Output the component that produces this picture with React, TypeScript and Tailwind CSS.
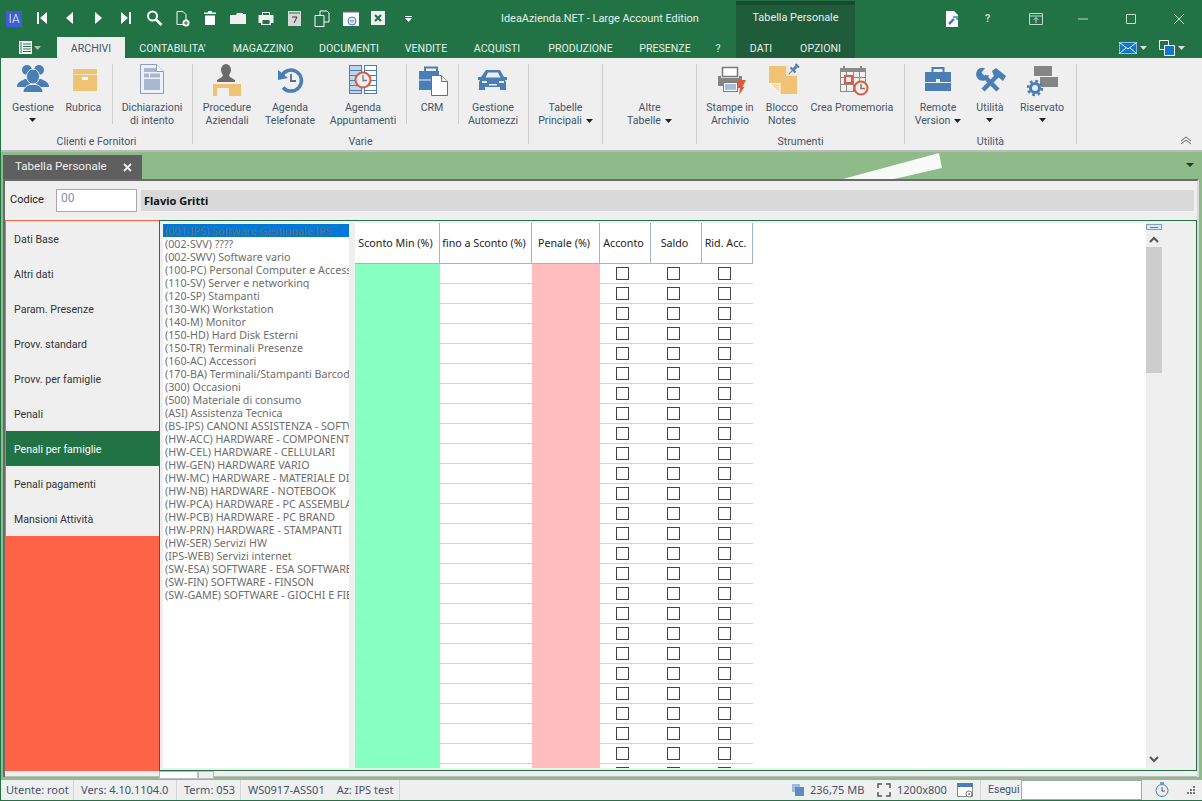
import React from "react";

const B = "#4a7eb6";
const Y = "#efc274";
const R = "#dd5a3c";
const BG = "#efefef";

const Caret = ({ c = "#222" }: { c?: string }) => (
  <svg width="7" height="4" viewBox="0 0 7 4" className="block"><path d="M0 0h7L3.500 4z" fill={c} /></svg>
);

const QA: React.ReactNode[] = [
  <path key="a" d="M4 3h2v12H4zM14 3v12L7 9z" fill="#fff" />,
  <path key="b" d="M12 3v12L5 9z" fill="#fff" />,
  <path key="c" d="M6 3v12l7-6z" fill="#fff" />,
  <path key="d" d="M4 3v12l7-6zM12 3h2v12h-2z" fill="#fff" />,
  <g key="e" fill="none" stroke="#fff" strokeWidth="2"><circle cx="7.500" cy="7" r="4.500" /><path d="M11 10.500l5.500 5.500" strokeWidth="2.500" /></g>,
  <g key="f"><path d="M4 2.500h6l3 3v10H4z" fill="none" stroke="#fff" /><circle cx="13" cy="14" r="3.500" fill="#fff" /><path d="M11 14h4M13 12v4" stroke="#217346" /></g>,
  <path key="g" d="M7 2h4v1.500h4V5H3V3.500h4zM4 6.500h10V16H4z" fill="#fff" />,
  <path key="h" d="M1 6h6l1-2h6v1h3v10H1z" fill="#efefef" />,
  <g key="i"><path d="M5 3h8v3h3.500v8H14v2H4v-2H1.500V6H5z" fill="#efefef" /><path d="M6 4h6v2H6zM5.500 11h7v4h-7z" fill="#217346" /></g>,
  <g key="j"><path d="M3 2h13v15H3z" fill="#d8d8d8" /><path d="M4 4h11" stroke="#217346" /><path d="M7 8h5l-3 6" fill="none" stroke="#333" /></g>,
  <g key="k" fill="none" stroke="#fff"><path d="M2 6.500h9v11H2zM7 6V2h7l2 2v9h-5" /></g>,
  <g key="l"><path d="M2 2h16v15H2z" fill="#fff" /><path d="M2 2h16v1.500H2z" fill="#666" /><circle cx="11" cy="12" r="4" fill="#dfe9f3" stroke="#4a7eb6" /><path d="M9 12h4" stroke="#4a7eb6" /></g>,
  <g key="m"><path d="M2 2h14v14H2z" fill="#efefef" /><path d="M6 6l6 6M12 6l-6 6" stroke="#217346" strokeWidth="2.200" /></g>,
];

function Item({ w, pr = 0, pl = 0, icon, lines, caret, inline, sep }: { w: number; pr?: number; pl?: number; icon?: React.ReactNode; lines: string[]; caret?: boolean; inline?: boolean; sep?: boolean }) {
  return (
    <div className={`flex flex-col items-center shrink-0 h-[60px] ${sep ? "border-r border-[#cfcfcf]" : ""}`} style={{ width: w, paddingRight: pr, paddingLeft: pl }}>
      <div className="h-[36px] w-[44px] shrink-0">
        {icon && <svg width="44" height="36" viewBox="0 0 44 36" className="block overflow-visible">{icon}</svg>}
      </div>
      <div className="mt-[1px] flex flex-col items-center leading-[13px] text-[#44546a] whitespace-nowrap">
        {lines.map((l, i) => (
          <div key={l} className="flex items-center gap-[4px]">
            {l}
            {inline && i === lines.length - 1 && <Caret />}
          </div>
        ))}
        {caret && <div className="mt-[4px]"><Caret /></div>}
      </div>
    </div>
  );
}

function Group({ w, label, children }: { w: number; label?: string; children?: React.ReactNode }) {
  return (
    <div className="shrink-0 flex flex-col border-r border-[#cdcdcd] mt-[6px] h-[80px]" style={{ width: w }}>
      <div className="flex h-[70px] shrink-0">{children}</div>
      <div className="h-[10px] leading-[16px] text-center text-[#44546a] whitespace-nowrap">{label}</div>
    </div>
  );
}

const users = (
  <g fill={B}>
    <circle cx="16" cy="6" r="5" /><circle cx="28" cy="6" r="5" />
    <path d="M6 23C6 18 10 17 14 15h4l2 8z" /><path d="M38 23C38 18 34 17 30 15h-4l-2 8z" />
    <ellipse cx="22" cy="12.500" rx="6.500" ry="7.500" stroke={BG} />
    <path d="M12 28.500c0-5 4-7 7-8h6c3 1 7 3 7 8z" stroke={BG} />
  </g>
);
const box = (
  <g fill={Y}>
    <rect x="11" y="5" width="24" height="5" />
    <rect x="11" y="10.700" width="24" height="16.300" />
    <rect x="20" y="13" width="6" height="3" fill="#fff" />
  </g>
);
const page = (
  <g>
    <path d="M10.500.500h16l7 7v22h-23z" fill="#eef1f8" stroke="#8e9dbb" />
    <path d="M26.500.500v7h7" fill="#fff" stroke="#8e9dbb" />
    <path d="M14 4h12v4H14zM14 9.500h5v4h-5zM20 9.500h10v4H20zM14 15h16v11H14z" fill="#a9b6d3" />
  </g>
);
const desk = (
  <g>
    <ellipse cx="21" cy="6" rx="5" ry="6" fill="#6b6b6b" />
    <path d="M18 11h6l1 2 5 3v2H12v-2l5-3z" fill="#6b6b6b" />
    <path d="M8 20h28v12H24v-8H12v8H8z" fill={Y} />
  </g>
);
const history = (
  <g>
    <path d="M13.500 12A10.500 10.500 0 1 1 15 23.500" fill="none" stroke={B} strokeWidth="3.500" />
    <path d="M10 6v10l10-2z" fill={B} />
    <path d="M23 10v7h5" fill="none" stroke="#5b6f88" strokeWidth="1.800" />
  </g>
);
const rows = [1, 6, 11, 16, 21, 26];
const appts = (
  <g>
    <rect x="8.500" y="1.500" width="12" height="28" fill="#c5d5e8" stroke={B} />
    <rect x="23.500" y="1.500" width="12" height="28" fill="#fff" stroke={B} />
    {rows.map((y) => <path key={y} d={`M8 ${y + 0.5}h13M23 ${y + 0.5}h13`} stroke={B} />)}
    <circle cx="22" cy="16" r="7.500" fill={BG} stroke={R} strokeWidth="2" />
    <path d="M22 11v5.500h4" stroke="#777" strokeWidth="1.300" fill="none" />
  </g>
);
const crm = (
  <g>
    <path d="M15 8V3.500h12V8" fill="none" stroke={B} strokeWidth="2" />
    <rect x="9" y="7" width="20" height="19" fill={B} />
    <path d="M9 16h20" stroke={BG} />
    <path d="M21.500 11.500h10l6 6v14h-16z" fill="#fff" stroke="#6f6f6f" />
    <path d="M31.500 11.500v6h6" fill={BG} stroke="#6f6f6f" />
  </g>
);
const car = (
  <g fill={B}>
    <path d="M15 6h14l4 7h3v3h-2l1 2v8h-6v-3H14v3H8v-8l1-2H7v-3h3z" />
    <path d="M17 8.500h10l2.500 5h-15z" fill={BG} />
    <rect x="11" y="17" width="5" height="2" fill={BG} /><rect x="28" y="17" width="5" height="2" fill={BG} />
    <rect x="18" y="20" width="8" height="1.500" fill={BG} />
  </g>
);
const printer = (
  <g>
    <rect x="14.500" y="3.500" width="15" height="9" fill="#fff" stroke="#7a7a7a" strokeWidth="1.500" />
    <path d="M10 12h3v2h18v-2h3v10H10z" fill="#858585" />
    <rect x="15.500" y="18.500" width="14" height="9" fill="#fff" stroke="#7a7a7a" />
    <path d="M17 21h11M17 23h11M17 25h11" stroke={B} />
    <path d="M30 16h8l-3.500 7h2l-5.500 8 1-7h-2.500z" fill={R} />
  </g>
);
const note = (
  <g>
    <path d="M9 2h28v28H20L9 19z" fill={Y} />
    <path d="M9.500 19.500h10.500v10.500z" fill="#f6dca8" stroke="#fff" />
    <rect x="26" y="0" width="13" height="12" fill={BG} opacity="0.85" />
    <g transform="rotate(45 33 6)" fill={B}>
      <rect x="30.500" y="-1" width="5" height="2" />
      <rect x="31.500" y="1" width="3" height="4" />
      <rect x="29.500" y="5" width="7" height="2" />
      <rect x="32.500" y="7" width="1" height="5" />
    </g>
  </g>
);
const cal = (
  <g>
    <rect x="10.500" y="6.500" width="25" height="21" fill="none" stroke="#8a8a8a" />
    <rect x="10" y="4" width="26" height="4" fill="#8a8a8a" />
    <path d="M14 2v4M31 2v4" stroke="#8a8a8a" strokeWidth="2" />
    <path d="M10 13.500h26M10 20.500h26M16.500 8v20M23.500 8v20M29.500 8v20" stroke="#8a8a8a" />
    <rect x="15" y="12" width="7" height="7" fill={BG} stroke={R} strokeWidth="2" />
    <circle cx="31" cy="24" r="6.500" fill={BG} stroke={R} strokeWidth="2" />
    <path d="M31 20v4.500h4" stroke="#777" strokeWidth="1.500" fill="none" />
  </g>
);
const bag = (
  <g fill={B}>
    <path d="M16.500 8V4h11v4" fill="none" stroke={B} strokeWidth="2" />
    <rect x="9" y="8" width="26" height="10" />
    <rect x="9" y="19" width="26" height="8" />
    <rect x="20" y="15" width="4" height="3.500" fill={BG} />
  </g>
);
const tools = (
  <g fill={B}>
    <path d="M17 4.200A6.500 6.500 0 1 0 21 11l-4.500 1-3-3.500z" />
    <path d="M16 12l14 14" stroke={B} strokeWidth="4.500" />
    <path d="M15 26L30 11" stroke={B} strokeWidth="4.500" />
    <path d="M24 7l4-3 10 8-3 5-5-4-3 2z" />
  </g>
);
const reserved = (
  <g>
    <rect x="14" y="2" width="18" height="10" fill="#858585" />
    <rect x="20" y="13" width="18" height="10" fill="#858585" />
    <circle cx="15" cy="24" r="6" fill={BG} />
    <circle cx="15" cy="24" r="4.500" fill="none" stroke={B} strokeWidth="3" />
    <circle cx="15" cy="24" r="7" fill="none" stroke={B} strokeWidth="2.500" strokeDasharray="2.750 2.750" />
  </g>
);

const families = [
  "(001-IPS) Software Gestionale IPS", "(002-SVV) ????", "(002-SWV) Software vario", "(100-PC) Personal Computer e Accessori",
  "(110-SV) Server e networking", "(120-SP) Stampanti", "(130-WK) Workstation", "(140-M) Monitor", "(150-HD) Hard Disk Esterni",
  "(150-TR) Terminali Presenze", "(160-AC) Accessori", "(170-BA) Terminali/Stampanti Barcode", "(300) Occasioni", "(500) Materiale di consumo",
  "(ASI) Assistenza Tecnica", "(BS-IPS) CANONI ASSISTENZA - SOFTWARE", "(HW-ACC) HARDWARE - COMPONENTI", "(HW-CEL) HARDWARE - CELLULARI",
  "(HW-GEN) HARDWARE VARIO", "(HW-MC) HARDWARE - MATERIALE DI CONSUMO", "(HW-NB) HARDWARE - NOTEBOOK", "(HW-PCA) HARDWARE - PC ASSEMBLATI",
  "(HW-PCB) HARDWARE - PC BRAND", "(HW-PRN) HARDWARE - STAMPANTI", "(HW-SER) Servizi HW", "(IPS-WEB) Servizi internet",
  "(SW-ESA) SOFTWARE - ESA SOFTWARE", "(SW-FIN) SOFTWARE - FINSON", "(SW-GAME) SOFTWARE - GIOCHI E FIERE",
];
const nav = ["Dati Base", "Altri dati", "Param. Presenze", "Provv. standard", "Provv. per famiglie", "Penali", "Penali per famiglie", "Penali pagamenti", "Mansioni Attività"];
const heads: [string, number][] = [["Sconto Min (%)", 85], ["fino a Sconto (%)", 92], ["Penale (%)", 68], ["Acconto", 51], ["Saldo", 51], ["Rid. Acc.", 51]];
const tabs: [string, number][] = [["CONTABILITA'", 95], ["MAGAZZINO", 86], ["DOCUMENTI", 86], ["VENDITE", 68], ["ACQUISTI", 74], ["PRODUZIONE", 93], ["PRESENZE", 76], ["?", 30]];

export default function App() {
  return (
    <div className="relative w-[1202px] h-[801px] overflow-hidden flex flex-col bg-[#217346] text-[10.6px] text-[#222] font-['Roboto',sans-serif]">
      {/* header */}
      <div className="flex h-[58px] shrink-0 text-[#e8f0ea]">
        <div className="w-[736px] flex flex-col">
          <div className="h-[37px] flex items-center pl-[6px]">
            <div className="w-[16px] h-[16px] bg-[#3a5fd8] text-white text-[12px] leading-[16px] text-center font-light mr-[7px]">IA</div>
            {QA.map((q, i) => (
              <div key={i} className="w-[28px] h-[20px] flex items-center justify-center">
                <svg width="20" height="20" viewBox="0 0 20 20">{q}</svg>
              </div>
            ))}
            <div className="ml-[12px] flex flex-col items-center gap-[1px]">
              <div className="w-[7px] h-[1px] bg-white" /><Caret c="#fff" />
            </div>
            <div className="ml-[89px] pt-[2px] text-[10.9px] whitespace-nowrap">IdeaAzienda.NET - Large Account Edition</div>
          </div>
          <div className="h-[21px] flex items-stretch">
            <div className="w-[57px] flex items-center pl-[19px] gap-[2px]">
              <svg width="13" height="13" viewBox="0 0 13 13"><path d="M0 0h13v13H0z" fill="#fff" /><path d="M2 1v11M4 3h8M4 5.500h8M4 8h8M4 10.500h8" stroke="#217346" /></svg>
              <Caret c="#bbb" />
            </div>
            <div className="w-[68px] pt-[3px] bg-[#efefef] text-[#44546a] flex items-center justify-center">ARCHIVI</div>
            {tabs.map(([t, w]) => (
              <div key={t} className="pt-[3px] flex items-center justify-center" style={{ width: w }}>{t}</div>
            ))}
          </div>
        </div>
        <div className="w-[119px] mt-[1px] flex flex-col bg-[#1f5c3a] border-t-[4px] border-[#174a2e]">
          <div className="h-[32px] pb-[5px] flex items-center justify-center text-[10.9px]">Tabella Personale</div>
          <div className="h-[21px] pt-[3px] flex items-center">
            <div className="w-[50px] text-center">DATI</div>
            <div className="flex-1 text-center">OPZIONI</div>
          </div>
        </div>
        <div className="flex-1 flex flex-col">
          <div className="h-[37px] flex items-center pl-[90px]">
            <svg width="14" height="16" viewBox="0 0 14 16"><path d="M1 0h8l4 4v12H1z" fill="#fff" /><path d="M4 13l5-5" stroke={B} strokeWidth="2.500" /><path d="M8 6h4v3" stroke={B} strokeWidth="1.500" fill="none" /></svg>
            <div className="ml-[26px] w-[6px] font-bold text-[#c9d8cf]">?</div>
            <svg className="ml-[38px]" width="14" height="12" viewBox="0 0 14 12" fill="none" stroke="#c9d8cf"><path d="M.5.500h13v11H.5zM.5 3h13M7 10V4.500M4.500 7L7 4.500 9.500 7" /></svg>
            <svg className="ml-[35px]" width="10" height="2" viewBox="0 0 10 2"><path d="M0 1h10" stroke="#c9d8cf" /></svg>
            <svg className="ml-[38px]" width="10" height="10" viewBox="0 0 10 10" fill="none"><path d="M.5.500h9v9h-9z" stroke="#c9d8cf" /></svg>
            <svg className="ml-[38px]" width="10" height="10" viewBox="0 0 10 10"><path d="M0 0l10 10M10 0L0 10" stroke="#c9d8cf" /></svg>
          </div>
          <div className="h-[21px] flex items-center pl-[264px] gap-[3px]">
            <svg width="18" height="12" viewBox="0 0 18 12"><rect width="18" height="12" fill="#0f76d0" stroke="#fff" /><path d="M1 1l8 6 8-6M1 11l6-5M17 11l-6-5" stroke="#fff" fill="none" /></svg>
            <Caret c="#ddd" />
            <svg className="ml-[9px]" width="16" height="16" viewBox="0 0 16 16"><path d="M.5.500h9v9h-9z" fill="#217346" stroke="#fff" /><path d="M5.500 5.500h10v10h-10z" fill="#0f76d0" stroke="#fff" /></svg>
            <Caret c="#ddd" />
          </div>
        </div>
      </div>

      {/* ribbon */}
      <div className="relative ml-[1px] h-[94px] shrink-0 bg-[#efefef] border-b-2 border-[#b9bdb9] flex pr-[1px]">
        <Group w={192} label="Clienti e Fornitori">
          <Item w={64} icon={users} lines={["Gestione"]} caret />
          <Item w={48} pr={10} icon={box} lines={["Rubrica"]} sep />
          <Item w={78} icon={page} lines={["Dichiarazioni", "di intento"]} />
        </Group>
        <Group w={336} label="Varie">
          <Item w={68} icon={desk} lines={["Procedure", "Aziendali"]} />
          <Item w={58} icon={history} lines={["Agenda", "Telefonate"]} />
          <Item w={88} pl={1} icon={appts} lines={["Agenda", "Appuntamenti"]} sep />
          <Item w={52} pr={1} icon={crm} lines={["CRM"]} sep />
          <Item w={68} icon={car} lines={["Gestione", "Automezzi"]} />
        </Group>
        <Group w={74}><Item w={73} lines={["Tabelle", "Principali"]} inline /></Group>
        <Group w={94}><Item w={93} lines={["Altre", "Tabelle"]} inline /></Group>
        <Group w={208} label="Strumenti">
          <Item w={66} icon={printer} lines={["Stampe in", "Archivio"]} />
          <Item w={38} icon={note} lines={["Blocco", "Notes"]} />
          <Item w={102} icon={cal} lines={["Crea Promemoria"]} />
        </Group>
        <Group w={172} label="Utilità">
          <Item w={66} icon={bag} lines={["Remote", "Version"]} inline />
          <Item w={38} icon={tools} lines={["Utilità"]} caret />
          <Item w={66} icon={reserved} lines={["Riservato"]} caret />
        </Group>
        <svg className="absolute left-[1179px] top-[78px]" width="12" height="9" viewBox="0 0 12 9" fill="none" stroke="#666"><path d="M1 5l5-4 5 4M1 8l5-4 5 4" /></svg>
      </div>

      {/* document area */}
      <div className="relative flex-1 min-h-0 flex flex-col bg-[#8fbb8a] ml-[1px]">
        <svg className="absolute left-[841px] top-0" width="102" height="28" viewBox="0 0 102 28"><path d="M97 1l3 15-48 11H1z" fill="#f7faf6" /></svg>
        <div className="h-[27px] shrink-0 flex items-end pl-[2px] relative">
          <div className="w-[139px] h-[24px] bg-[#5f5f5f] text-[#eee] flex items-center pl-[12px] text-[11.6px]">
            <span className="w-[108px]">Tabella Personale</span>
            <svg width="9" height="9" viewBox="0 0 9 9"><path d="M1 1l7 7M8 1L1 8" stroke="#eee" strokeWidth="1.800" /></svg>
          </div>
          <div className="ml-auto mr-[8px] mb-[12px] flex"><svg width="8" height="4" viewBox="0 0 8 4"><path d="M0 0h8L4 4z" fill="#333" /></svg></div>
        </div>
        <div className="flex-1 min-h-0 ml-[2px] mr-[3px] mb-[3px] flex flex-col border-t-2 border-l-2 border-r-2 border-[#6a6a6a] border-r-[#d8d8d8] bg-[#efefef]">
          <div className="h-[39px] shrink-0 flex items-center pl-[5px] pr-[3px]">
            <span className="w-[46px] text-[#222] text-[11px]">Codice</span>
            <div className="w-[81px] h-[23px] bg-white border border-[#a9a9a9] text-[#7f93b8] text-[12px] pl-[4px] leading-[17px]">00</div>
            <div className="ml-[4px] flex-1 h-[21px] bg-[#d9d9d9] font-bold text-[11px] text-[#111] pl-[3px] leading-[21px] font-['Noto_Sans',sans-serif]">Flavio Gritti</div>
          </div>
          <div className="flex-1 min-h-0 flex">
            <div className="w-[154px] shrink-0 bg-[#ff6347] pl-[1px] pt-[1px]">
              {nav.map((n, i) => (
                <div key={n} className={`h-[35px] pt-[3px] flex items-center pl-[8px] ${i === 6 ? "bg-[#217346] text-white" : "bg-[#efefef] text-[#333]"}`}>{n}</div>
              ))}
            </div>
            <div className="flex-1 min-w-0 flex border border-[#217346] pt-[2px] pl-[3px] font-['Noto_Sans',sans-serif] text-[10.7px]">
              <div className="w-[186px] shrink-0 bg-white overflow-hidden mb-[2px] pt-[1px]">
                {families.map((f, i) => (
                  <div key={f} className={`h-[13px] pt-[1px] leading-[13px] pl-[2px] whitespace-nowrap overflow-hidden text-[#6d6d6d] ${i === 0 ? "bg-[#0078d7]" : ""}`}>{f}</div>
                ))}
              </div>
              <div className="ml-[6px] w-[791px] shrink-0 bg-white overflow-hidden mb-[2px]">
                <div className="w-[398px]">
                  <div className="flex h-[41px] border-b border-[#9db5cf]">
                    {heads.map(([h, w]) => (
                      <div key={h} className="flex items-center justify-center pr-[3px] border-r border-[#9db5cf] text-[#222] whitespace-nowrap" style={{ width: w }}>{h}</div>
                    ))}
                  </div>
                  {Array.from({ length: 26 }).map((_, r) => (
                    <div key={r} className="flex h-[20px]">
                      {heads.map(([h, w], c) => (
                        <div key={h} className={`flex items-center justify-center pr-[6px] border-b border-[#d2d2d2] ${c === 0 ? "bg-[#86ffc0]" : c === 2 ? "bg-[#ffbdbd]" : "bg-white"}`} style={{ width: w }}>
                          {c > 2 && <div className="w-[13px] h-[13px] mb-[1px] border border-[#444] bg-white" />}
                        </div>
                      ))}
                    </div>
                  ))}
                </div>
              </div>
              <div className="w-[16px] shrink-0 flex flex-col items-center relative bg-[#efefef] mb-[2px]">
                <div className="w-[16px] h-[6px] mt-[1px] bg-[#dde7f2] border border-[#7d9fc6] flex items-center justify-center"><div className="w-[8px] h-[1px] bg-[#5b82b0]" /></div>
                <svg className="mt-[6px]" width="10" height="7" viewBox="0 0 10 7" fill="none" stroke="#555" strokeWidth="2"><path d="M1 6l4-4 4 4" /></svg>
                <div className="w-[16px] h-[126px] mt-[4px] bg-[#cdcdcd]" />
                <svg className="mt-auto mb-[5px]" width="10" height="7" viewBox="0 0 10 7" fill="none" stroke="#555" strokeWidth="2"><path d="M1 1l4 4 4-4" /></svg>
              </div>
            </div>
          </div>
          <div className="h-[6px] shrink-0 flex pl-[154px] border-b border-[#bdbdbd]">
            <div className="w-[39px] h-[8px] border border-[#bbb] bg-white shrink-0" />
            <div className="w-[16px] h-[8px] border border-[#bbb] bg-[#efefef] shrink-0" />
          </div>
        </div>
      </div>

      {/* status bar */}
      <div className="ml-[1px] h-[21px] shrink-0 bg-[#efefef] border-b border-[#217346] flex items-center text-[11px] text-[#44546a] whitespace-nowrap font-['Noto_Sans',sans-serif]">
        <div className="w-[73px] pl-[5px] border-r border-[#d4d4d4] h-full leading-[20px]">Utente: root</div>
        <div className="w-[103px] pl-[7px] border-r border-[#d4d4d4] h-full leading-[20px]">Vers: 4.10.1104.0</div>
        <div className="w-[64px] pl-[7px] border-r border-[#d4d4d4] h-full leading-[20px]">Term: 053</div>
        <div className="w-[159px] pl-[7px] border-r border-[#d4d4d4] h-full leading-[20px] flex gap-[12px]"><span>WS0917-ASS01</span><span>Az: IPS test</span></div>
        <svg className="ml-[392px]" width="12" height="12" viewBox="0 0 12 12"><rect x="0" y="0" width="8" height="8" fill="#9fbadb" /><rect x="3" y="3" width="9" height="9" fill="#5c8cc4" /></svg>
        <span className="ml-[6px] w-[50px]">236,75 MB</span>
        <svg className="ml-[17px]" width="14" height="14" viewBox="0 0 14 14" fill="none" stroke="#555" strokeWidth="1.500"><path d="M1 5V1h4M9 1h4v4M13 9v4H9M5 13H1V9" /></svg>
        <span className="ml-[6px] w-[49px]">1200x800</span>
        <svg className="ml-[11px]" width="17" height="15" viewBox="0 0 17 15"><path d="M.5.500h15v13H.5z" fill="#fff" stroke="#888" /><path d="M0 0h16v4H0z" fill={B} /><circle cx="12" cy="11" r="3" fill="#fff" stroke="#777" /><circle cx="12" cy="11" r="1" fill="#777" /></svg>
        <div className="ml-[6px] w-[1px] h-full bg-[#d4d4d4]" />
        <span className="ml-[7px] w-[33px] font-['Roboto',sans-serif] text-[10.6px]">Esegui</span>
        <div className="w-[121px] h-[20px] bg-white border border-[#a9a9a9]" />
        <svg className="ml-[13px]" width="14" height="16" viewBox="0 0 14 16" fill="none" stroke={B}><circle cx="7" cy="8.500" r="6" /><path d="M7 5v4h3" stroke="#555" /><path d="M5 1h4" strokeWidth="1.500" /></svg>
        <svg className="ml-[18px]" width="8" height="8" viewBox="0 0 8 8" fill="#777"><path d="M6 0h2v2H6zM3 3h2v2H3zM6 3h2v2H6zM0 6h2v2H0zM3 6h2v2H3zM6 6h2v2H6z" /></svg>
      </div>
    </div>
  );
}
